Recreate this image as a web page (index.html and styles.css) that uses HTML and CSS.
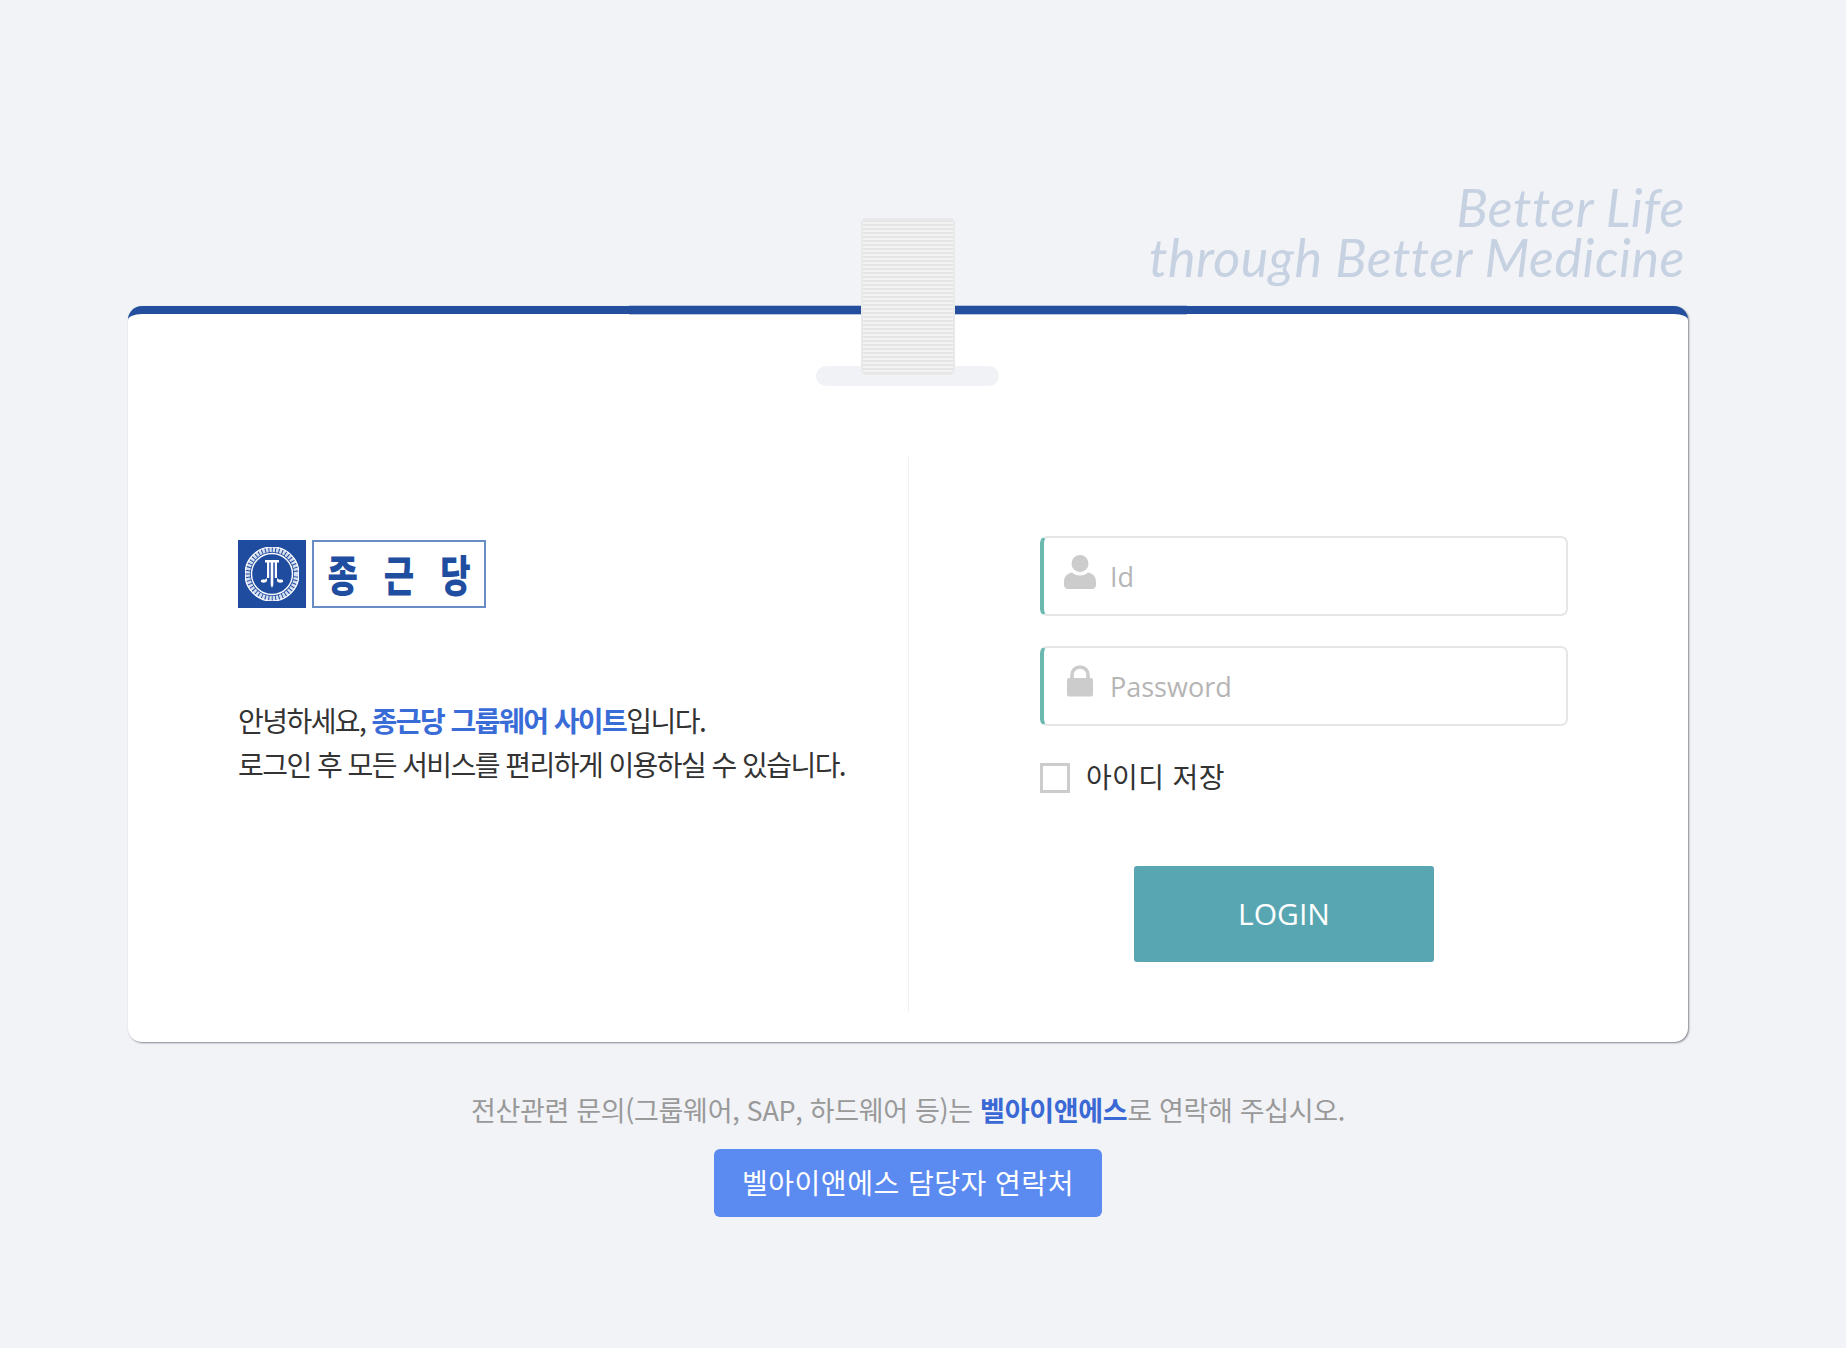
FILE: index.html
```html
<!DOCTYPE html>
<html lang="ko">
<head>
<meta charset="utf-8">
<title>종근당 그룹웨어 로그인</title>
<link rel="stylesheet" href="styles.css">
</head>
<body>
<main class="page">
  <p class="slogan">Better Life<br>through Better Medicine</p>
  <section class="card">
    <div class="bar-glow"></div>
    <div class="tape-shadow"></div>
    <div class="tape"></div>
    <div class="columns">
      <div class="intro">
        <div class="logo">
          <div class="logo-seal">
            <svg width="54" height="54" viewBox="0 0 54 54">
              <circle cx="27" cy="27" r="24.5" fill="none" stroke="#d5def0" stroke-width="5" stroke-dasharray="2.5 1"/>
              <circle cx="27" cy="27" r="27" fill="none" stroke="#fff" stroke-width="1.2"/>
              <circle cx="27" cy="27" r="20.5" fill="none" stroke="#fff" stroke-width="1.4"/>
              <path d="M20 13h14v2.4h-2v15.6h-2.200V15.400h-1.500V38l-1.300 3-1.300-3V15.400h-1.500V31H22V15.400h-2z" fill="#fff"/>
              <path d="M16 33c3-1 5 0 6-2v3c-1 2-4 2-6 1zM38 33c-3-1-5 0-6-2v3c1 2 4 2 6 1z" fill="#fff"/>
            </svg>
          </div>
          <div class="logo-name"><span>종</span><span>근</span><span>당</span></div>
        </div>
        <p class="greeting">안녕하세요, <strong>종근당 그룹웨어 사이트</strong>입니다.<br>로그인 후 모든 서비스를 편리하게 이용하실 수 있습니다.</p>
      </div>
      <form class="login">
        <label class="field">
          <svg class="field-icon" width="32" height="34" viewBox="0 0 32 34">
            <circle cx="16" cy="8.500" r="8.500" fill="#ccc"/>
            <path d="M8 17.500c2 2 5 3 8 3s6-1 8-3c5 1 8 4 8 9.500v3c0 2.500-2 4-4 4H4c-2 0-4-1.500-4-4v-3c0-5.500 3-8.500 8-9.500z" fill="#ccc"/>
          </svg>
          <input class="field-input" type="text" placeholder="Id">
        </label>
        <label class="field">
          <svg class="field-icon" width="32" height="32" viewBox="0 0 32 32">
            <path d="M8 14V10a8 8 0 0 1 16 0v4" fill="none" stroke="#ccc" stroke-width="3.500"/>
            <rect x="3" y="13" width="26" height="18.500" rx="2" fill="#ccc"/>
          </svg>
          <input class="field-input" type="password" placeholder="Password">
        </label>
        <label class="remember"><span class="check"></span><span class="remember-text">아이디 저장</span></label>
        <button class="login-btn" type="button">LOGIN</button>
      </form>
    </div>
  </section>
  <footer class="contact">
    <p class="contact-text">전산관련 문의(그룹웨어, SAP, 하드웨어 등)는 <strong>벨아이앤에스</strong>로 연락해 주십시오.</p>
    <button class="contact-btn" type="button">벨아이앤에스 담당자 연락처</button>
  </footer>
</main>
</body>
</html>
```
FILE: styles.css
```css
* { box-sizing: border-box; }
html, body { margin: 0; height: 100%; }
body {
  background: #f1f3f7;
  font-family: "Noto Sans CJK KR", "Open Sans", sans-serif;
  color: #333;
}
.page {
  width: 1560px;
  margin-left: 128px;
  padding-top: 182px;
}
.slogan {
  margin: 0;
  height: 124px;
  padding-right: 3px;
  text-align: right;
  font: italic 400 52px/50px Lato, sans-serif;
  letter-spacing: .5px;
  color: #c6d1e1;
}
.card {
  position: relative;
  height: 736px;
  background: #fff;
  border-top: 8px solid #234f9e;
  border-radius: 14px;
  box-shadow: 1px 1px 2px rgba(90, 90, 100, .7);
  padding-top: 143px;
}
.bar-glow {
  position: absolute;
  top: -9px;
  left: 501px;
  width: 558px;
  height: 10px;
  border-top: 1px solid #b6c4de;
  border-bottom: 1px solid #b6c4de;
}
.tape {
  position: absolute;
  top: -96px;
  left: 733px;
  width: 94px;
  height: 157px;
  border: 2px solid #e9e9e9;
  border-radius: 5px;
  background: repeating-linear-gradient(#e5e5e5 0 2px, #f3f3f3 2px 4px);
}
.tape-shadow {
  position: absolute;
  top: 52px;
  left: 688px;
  width: 183px;
  height: 20px;
  border-radius: 10px;
  background: #f1f2f6;
}
.columns {
  display: grid;
  grid-template-columns: 781px 1fr;
  height: 555px;
}
.intro {
  border-right: 1px solid #f0f0f0;
  padding: 83px 0 0 110px;
}
.logo { display: flex; gap: 6px; height: 68px; }
.logo-seal {
  width: 68px;
  background: #204c9f;
  display: flex;
  align-items: center;
  justify-content: center;
}
.logo-name {
  width: 174px;
  border: 2px solid #6a8cc4;
  display: flex;
  align-items: center;
  justify-content: center;
  gap: 26px;
  color: #1f4ea0;
  font-size: 33px;
  font-weight: 900;
  line-height: 1;
}
.logo-name span { transform: scaleY(1.3); }
.greeting {
  margin: 90px 0 0;
  font-size: 28px;
  line-height: 44px;
  font-weight: 400;
  letter-spacing: -1.55px;
  color: #333;
}
.greeting strong { color: #3a6cd8; font-weight: 700; }
.login {
  padding: 79px 0 0 131px;
  width: 659px;
}
.field {
  position: relative;
  display: block;
  height: 80px;
  margin-bottom: 30px;
}
.field-icon {
  position: absolute;
  left: 24px;
  top: 50%;
  margin-top: -21px;
}
.field-input {
  width: 100%;
  height: 100%;
  border: 2px solid #e6e6e6;
  border-left: 4px solid #6bb8ae;
  border-radius: 7px;
  background: #fff;
  padding: 0 0 0 66px;
  font: 400 27px "Open Sans", sans-serif;
  color: #333;
  outline: none;
}
.field-input::placeholder { color: #b5b5b5; opacity: 1; }
.remember {
  display: flex;
  align-items: center;
  gap: 16px;
  height: 30px;
  margin-top: 37px;
  font-size: 28px;
  letter-spacing: .35px;
  color: #333;
}
.remember-text { margin-top: -4px; }
.check {
  width: 30px;
  height: 30px;
  border: 3px solid #ccc;
}
.login-btn {
  display: block;
  width: 300px;
  height: 96px;
  margin: 73px 0 0 94px;
  padding: 0 0 2px;
  border: 0;
  border-radius: 3px;
  background: #58a6b2;
  color: #fff;
  font: 400 30px "Open Sans", sans-serif;
}
.contact {
  display: flex;
  flex-direction: column;
  align-items: center;
  padding-top: 44px;
}
.contact-text {
  margin: 0;
  font-size: 27px;
  line-height: 48px;
  font-weight: 400;
  letter-spacing: -.32px;
  color: #999;
}
.contact-text strong { color: #3a68d4; font-weight: 700; }
.contact-btn {
  width: 388px;
  height: 68px;
  margin-top: 15px;
  border: 0;
  border-radius: 6px;
  background: #5b8bf0;
  color: #fff;
  font-family: inherit;
  font-size: 28px;
  letter-spacing: .5px;
  font-weight: 400;
  padding: 0 0 2px;
}
```
